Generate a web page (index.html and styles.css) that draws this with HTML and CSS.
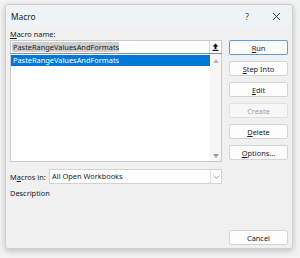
FILE: index.html
```html
<!DOCTYPE html>
<html lang="en">
<head>
  <meta charset="UTF-8">
  <title>Macro</title>
  <link rel="stylesheet" href="styles.css">
</head>
<body>
  <div class="dialog">
    <div class="titlebar">
      <span class="title">Macro</span>
      <span class="help">?</span>
      <span class="close">
        <svg width="9" height="9" viewBox="0 0 9 9"><path d="M1 1L8 8M8 1L1 8" stroke="#333" stroke-width="1"/></svg>
      </span>
    </div>

    <div class="content">
      <div class="left">
        <div class="label"><u>M</u>acro name:</div>
        <div class="field">
          <span class="field-text"><span class="sel">PasteRangeValuesAndFormats</span></span>
          <span class="field-btn">
            <svg width="7" height="8" viewBox="0 0 7 8"><path d="M3.5 0.5L6.5 3.5H4.5V6H2.5V3.5H0.5Z" fill="#111"/><rect x="0.5" y="6.8" width="6" height="1.2" fill="#111"/></svg>
          </span>
        </div>
        <div class="list">
          <div class="list-items">
            <div class="item selected">PasteRangeValuesAndFormats</div>
          </div>
          <div class="scrollbar">
            <svg width="6" height="4" viewBox="0 0 6 4"><path d="M0 4L3 0L6 4Z" fill="#b8b8b8"/></svg>
            <svg width="6" height="4" viewBox="0 0 6 4"><path d="M0 0L3 4L6 0Z" fill="#9a9a9a"/></svg>
          </div>
        </div>

        <div class="macros-in">
          <span class="label">M<u>a</u>cros in:</span>
          <div class="select">
            <span class="select-text">All Open Workbooks</span>
            <span class="select-btn">
              <svg width="7" height="4" viewBox="0 0 7 4"><path d="M0.5 0.5L3.5 3.5L6.5 0.5" fill="none" stroke="#999" stroke-width="0.9"/></svg>
            </span>
          </div>
        </div>
        <div class="label desc">Description</div>
      </div>

      <div class="right">
        <button class="btn default"><u>R</u>un</button>
        <button class="btn"><u>S</u>tep Into</button>
        <button class="btn"><u>E</u>dit</button>
        <button class="btn" disabled>Create</button>
        <button class="btn"><u>D</u>elete</button>
        <button class="btn"><u>O</u>ptions...</button>
        <button class="btn cancel">Cancel</button>
      </div>
    </div>
  </div>
</body>
</html>
```

FILE: styles.css
```css
* {
  box-sizing: border-box;
}

html {
  font-family: "Noto Sans", "Open Sans", sans-serif;
  font-size: 7.4px;
  color: #1b1b1b;
}

body {
  margin: 0;
  width: 300px;
  height: 258px;
  background: #f3f3f3;
  padding: 4px 7px 9px 5px;
}

.dialog {
  width: 288px;
  height: 245px;
  background: #f0f0f0;
  border: 1px solid #cfcfcf;
  border-radius: 3px;
  box-shadow: 0 2px 6px rgba(0, 0, 0, 0.22);
  display: flex;
  flex-direction: column;
  overflow: hidden;
}

.titlebar {
  height: 22px;
  background: #eef3f6;
  display: flex;
  align-items: center;
  padding-left: 5px;
}

.title {
  font-size: 8.4px;
  flex: 1;
}

.help {
  width: 30px;
  text-align: center;
  font-size: 8.4px;
  color: #333;
}

.close {
  width: 30px;
  display: flex;
  justify-content: center;
  padding-right: 2px;
}

.content {
  flex: 1;
  display: flex;
  gap: 7px;
  padding: 0 4px 3px 4px;
}

.left {
  width: 212px;
  display: flex;
  flex-direction: column;
}

.label {
  line-height: 10px;
  height: 13px;
  padding-top: 2px;
}

.field {
  height: 14px;
  background: #fff;
  border: 1px solid #c9c9c9;
  border-bottom-color: #8a8a8a;
  display: flex;
}

.field-text {
  flex: 1;
  padding: 1px 1px;
  line-height: 10px;
}

.sel {
  background: #cfcfcf;
  padding: 0 0 0 1px;
}

.field-btn {
  width: 12px;
  border-left: 1px solid #d6d6d6;
  display: flex;
  align-items: center;
  justify-content: center;
}

.list {
  height: 108px;
  background: #fff;
  border: 1px solid #c9c9c9;
  border-top: none;
  display: flex;
}

.list-items {
  flex: 1;
  padding-top: 1px;
}

.item {
  height: 11px;
  line-height: 11px;
  padding-left: 2px;
}

.item.selected {
  background: #0078d7;
  color: #fff;
}

.scrollbar {
  width: 11px;
  background: #f6f6f6;
  display: flex;
  flex-direction: column;
  align-items: center;
  justify-content: space-between;
  padding: 5px 0 3px;
}

.macros-in {
  margin-top: 7px;
  display: flex;
  align-items: center;
}

.macros-in .label {
  width: 39px;
  height: auto;
  padding: 0;
}

.select {
  flex: 1;
  height: 15px;
  background: #fff;
  border: 1px solid #d2d2d2;
  display: flex;
}

.select-text {
  flex: 1;
  line-height: 13px;
  padding-left: 2px;
}

.select-btn {
  width: 11px;
  border-left: 1px solid #e4e4e4;
  display: flex;
  align-items: center;
  justify-content: center;
}

.desc {
  margin-top: 2px;
}

.right {
  width: 59px;
  display: flex;
  flex-direction: column;
  gap: 6px;
  padding-top: 13px;
}

.btn {
  height: 15px;
  padding: 0;
  font: inherit;
  color: #1b1b1b;
  background: #fdfdfd;
  border: 1px solid #d3d3d3;
  border-radius: 2px;
  text-align: center;
}

.btn.default {
  border-color: #5a9fd8;
}

.btn:disabled {
  color: #a0a0a0;
  background: #f7f7f7;
  border-color: #e0e0e0;
}

.btn.cancel {
  margin-top: auto;
}
```
